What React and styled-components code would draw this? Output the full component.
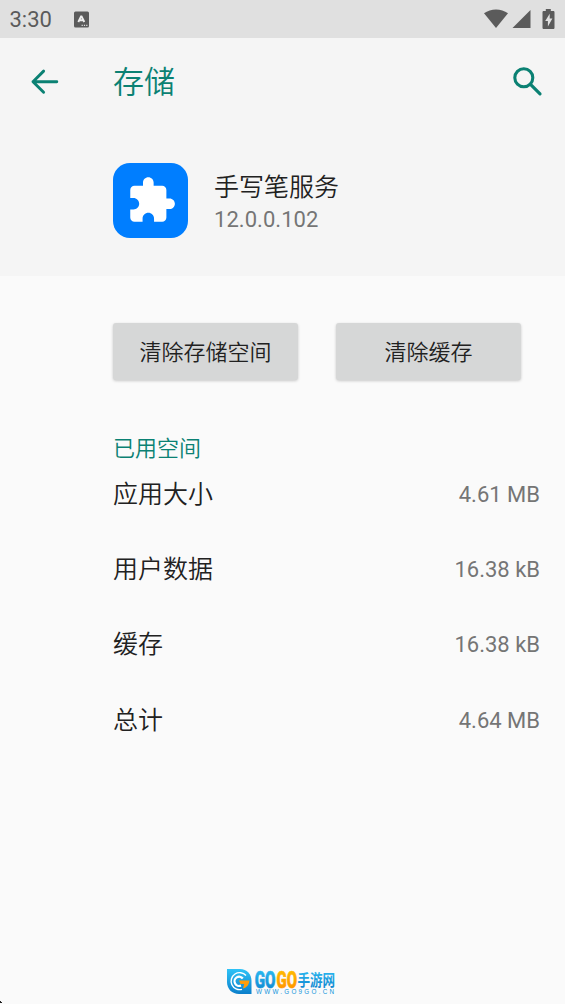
import React from "react";
import styled, { createGlobalStyle } from "styled-components";

const teal = "#0b8173";
const statusGray = "#5b5b5b";

const GlobalStyle = createGlobalStyle`
  * {
    box-sizing: border-box;
  }

  body {
    margin: 0;
    background: #fafafa;
    font-family: Roboto, "Noto Sans CJK SC", sans-serif;
    color: #212121;
  }
`;

const Screen = styled.div`
  display: flex;
  flex-direction: column;
  width: 565px;
  height: 1004px;
  overflow: hidden;
  background: #fafafa;
`;

const StatusBar = styled.div`
  display: flex;
  align-items: center;
  height: 38px;
  padding: 0 10px 0 9.5px;
  background: #e0e0e0;
  color: ${statusGray};
`;

const Clock = styled.span`
  width: 63.5px;
  font-size: 22px;
  font-weight: 450;
  line-height: 38px;
  padding-top: 1px;
`;

const StatusIcons = styled.div`
  display: flex;
  align-items: center;
  gap: 3px;
  margin-left: auto;
`;

const BatterySlot = styled.span`
  display: flex;
  margin-left: 8px;
`;

const Header = styled.header`
  height: 238px;
  background: #f5f5f5;
`;

const Toolbar = styled.div`
  display: flex;
  align-items: center;
  height: 88px;
  padding: 0 21.5px 0 30px;
`;

const Title = styled.h1`
  flex: 1;
  margin: 2px 0 0 54px;
  font-size: 31px;
  font-weight: 350;
  line-height: 40px;
  color: ${teal};
`;

const AppInfo = styled.div`
  display: flex;
  padding: 37px 0 0 113px;
`;

const AppIcon = styled.div`
  width: 75px;
  height: 75px;
  padding: 12px 0 0 13px;
  border-radius: 17px;
  background: #007eff;
`;

const AppText = styled.div`
  padding: 8px 0 0 26px;
`;

const AppName = styled.div`
  font-size: 25px;
  font-weight: 350;
  line-height: 34px;
`;

const AppVersion = styled.div`
  font-size: 22px;
  line-height: 29px;
  letter-spacing: 0.05px;
  color: #757575;
`;

const Actions = styled.div`
  display: flex;
  gap: 38px;
  padding: 47px 44px 0 113px;
`;

const ActionButton = styled.button`
  flex: 1;
  height: 57px;
  padding: 0 0 3px;
  border: 0;
  border-radius: 3px;
  background: #d6d7d7;
  box-shadow: 0 1px 3px rgba(0, 0, 0, 0.2);
  font: inherit;
  font-size: 22px;
  font-weight: 350;
  color: #212121;
`;

const Section = styled.section`
  padding: 54px 25px 0 113px;
`;

const SectionTitle = styled.h2`
  margin: 0;
  font-size: 22px;
  font-weight: 350;
  line-height: 30px;
  color: ${teal};
`;

const UsageList = styled.div`
  margin-top: -10px;
`;

const UsageRow = styled.div`
  display: flex;
  align-items: center;
  justify-content: space-between;
  height: 75.4px;
`;

const UsageLabel = styled.span`
  font-size: 25px;
  font-weight: 350;
`;

const UsageValue = styled.span`
  padding-top: 5px;
  font-size: 22px;
  color: #757575;
`;

const Footer = styled.footer`
  display: flex;
  align-items: flex-end;
  margin-top: auto;
`;

const LogoSlot = styled.div`
  height: 44px;
  margin-left: 220px;
`;

const usage = [
  { label: "应用大小", value: "4.61 MB" },
  { label: "用户数据", value: "16.38 kB" },
  { label: "缓存", value: "16.38 kB" },
  { label: "总计", value: "4.64 MB" }
];

function InputIcon() {
  return (
    <svg width="16" height="17" viewBox="0 0 16 17">
      <rect x="1" y="0.5" width="15" height="16" rx="1.5" fill={statusGray} />
      <path
        d="M5.300 11 8.300 4.800l3 6.200M6.400 9.300h3.800"
        fill="none"
        stroke="#eee"
        strokeWidth="1.9"
        strokeLinejoin="bevel"
      />
      <path d="M8.600 14.300h1.200M10.900 14.300h1.200M13.200 14.300h1.200" stroke="#e0e0e0" strokeWidth="1.2" />
    </svg>
  );
}

function WifiIcon() {
  return (
    <svg width="26" height="20" viewBox="0 0 26 20">
      <path d="M1 4.200C7.800-.9 18.200-.9 25 4.200L13 19z" fill={statusGray} />
    </svg>
  );
}

function SignalIcon() {
  return (
    <svg width="19" height="20" viewBox="0 0 19 20">
      <path d="M.5 19 18.500 1V19z" fill={statusGray} />
    </svg>
  );
}

function BatteryIcon() {
  return (
    <svg width="13" height="20" viewBox="0 0 13 20">
      <path
        d="M3.800 0h5v2h2.400c.8 0 1.300.5 1.300 1.300v15.400c0 .8-.5 1.300-1.300 1.300H1.800C1 20 .5 19.500.5 18.700V3.300C.5 2.500 1 2 1.800 2h2z"
        fill={statusGray}
      />
      <path d="M7.700 4.800 3.200 12h2.700v5.400l4.500-7.800H7.700z" fill="#e0e0e0" />
    </svg>
  );
}

function BackIcon() {
  return (
    <svg width="29" height="26" viewBox="0 0 29 26">
      <path
        d="M26.800 12.700H3M13.600 2.100 3 12.700l10.600 10.600"
        fill="none"
        stroke={teal}
        strokeWidth="2.9"
        strokeLinecap="round"
        strokeLinejoin="round"
      />
    </svg>
  );
}

function SearchIcon() {
  return (
    <svg width="32" height="32" viewBox="0 0 32 32">
      <circle cx="11.8" cy="11.8" r="9" fill="none" stroke={teal} strokeWidth="3.1" />
      <path d="m18.500 18.400 9.500 9.500" stroke={teal} strokeWidth="3.2" strokeLinecap="round" />
    </svg>
  );
}

function PuzzleIcon() {
  return (
    <svg width="51" height="51" viewBox="0 0 24 24">
      <path
        d="M20.5 11H19V7c0-1.1-.9-2-2-2h-4V3.5C13 2.12 11.88 1 10.5 1S8 2.12 8 3.5V5H4c-1.1 0-1.99.9-1.99 2v3.8H3.5c1.49 0 2.7 1.21 2.7 2.7s-1.21 2.7-2.7 2.7H2V20c0 1.1.9 2 2 2h3.8v-1.5c0-1.49 1.21-2.7 2.7-2.7 1.49 0 2.7 1.21 2.7 2.7V22H17c1.1 0 2-.9 2-2v-4h1.5c1.38 0 2.5-1.12 2.5-2.5S21.88 11 20.5 11z"
        fill="#fff"
      />
    </svg>
  );
}

function SiteLogo() {
  return (
    <svg width="120" height="44" viewBox="0 -6 120 44">
      <defs>
        <linearGradient id="blue" x1="0" y1="0" x2="0" y2="1">
          <stop offset="0" stopColor="#2fc3f7" />
          <stop offset="1" stopColor="#0b7fcb" />
        </linearGradient>
        <linearGradient id="orange" x1="0" y1="0" x2="0" y2="1">
          <stop offset="0" stopColor="#ffc400" />
          <stop offset="1" stopColor="#ff8a00" />
        </linearGradient>
      </defs>
      <path d="M4 3h13c7 0 11.500 5 11.500 12v13H16C9 28 4 23 4 16z" fill="url(#blue)" />
      <path
        d="M23 9.500A8.500 8.500 0 1 0 19 23.300"
        fill="none"
        stroke="#fff"
        strokeWidth="1.4"
      />
      <path
        d="M19.800 12.500A4.600 4.600 0 1 0 18 19.500"
        fill="none"
        stroke="#fff"
        strokeWidth="2.2"
      />
      <path d="M16 14.500H26.500C26 18.500 24 21.500 20 22.500l1.200-4.500H17.500z" fill="#ff9d0a" />
      <g
        fontFamily="Roboto, sans-serif"
        fontWeight="900"
        fontSize="23.5"
        strokeWidth="0.6"
      >
        <text
          x="31.7"
          y="22"
          textLength="20.8"
          lengthAdjust="spacingAndGlyphs"
          fill="url(#blue)"
          stroke="url(#blue)"
        >
          GO
        </text>
        <text
          x="53.4"
          y="22"
          textLength="20.6"
          lengthAdjust="spacingAndGlyphs"
          fill="url(#orange)"
          stroke="url(#orange)"
        >
          GO
        </text>
      </g>
      <text
        x="74.4"
        y="19.8"
        textLength="37.6"
        lengthAdjust="spacingAndGlyphs"
        fontFamily="'Noto Sans CJK SC', sans-serif"
        fontWeight="700"
        fontSize="16"
        fill="url(#blue)"
      >
        手游网
      </text>
      <text
        x="33"
        y="28"
        textLength="78"
        fontFamily="'Liberation Sans', sans-serif"
        fontWeight="400"
        fontSize="6.3"
        fill="#0f93da"
      >
        WWW.GO9GO.CN
      </text>
    </svg>
  );
}

function CornerMark() {
  return (
    <svg width="3" height="4" viewBox="0 0 3 4">
      <path d="M0 1h1v1h1v1H0z" fill="#222" />
    </svg>
  );
}

function App() {
  return (
    <Screen>
      <GlobalStyle />
      <StatusBar>
        <Clock>3:30</Clock>
        <InputIcon />
        <StatusIcons>
          <WifiIcon />
          <SignalIcon />
          <BatterySlot>
            <BatteryIcon />
          </BatterySlot>
        </StatusIcons>
      </StatusBar>
      <Header>
        <Toolbar>
          <BackIcon />
          <Title>存储</Title>
          <SearchIcon />
        </Toolbar>
        <AppInfo>
          <AppIcon>
            <PuzzleIcon />
          </AppIcon>
          <AppText>
            <AppName>手写笔服务</AppName>
            <AppVersion>12.0.0.102</AppVersion>
          </AppText>
        </AppInfo>
      </Header>
      <Actions>
        <ActionButton>清除存储空间</ActionButton>
        <ActionButton>清除缓存</ActionButton>
      </Actions>
      <Section>
        <SectionTitle>已用空间</SectionTitle>
        <UsageList>
          {usage.map(u => (
            <UsageRow key={u.label}>
              <UsageLabel>{u.label}</UsageLabel>
              <UsageValue>{u.value}</UsageValue>
            </UsageRow>
          ))}
        </UsageList>
      </Section>
      <Footer>
        <CornerMark />
        <LogoSlot>
          <SiteLogo />
        </LogoSlot>
      </Footer>
    </Screen>
  );
}

export default App;
